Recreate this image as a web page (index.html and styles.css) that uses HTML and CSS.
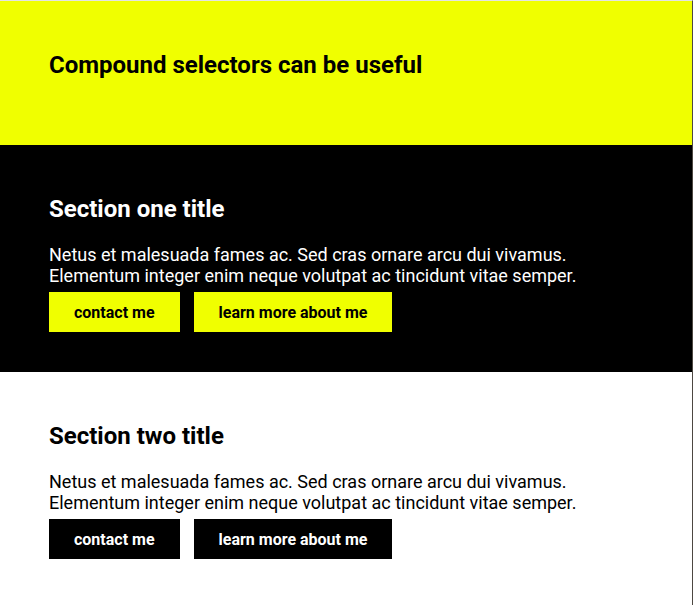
FILE: index.html
```html
<!DOCTYPE html>
<html lang="en">
<head>
<meta charset="utf-8">
<title>Compound selectors</title>
<link rel="stylesheet" href="styles.css">
</head>
<body>
<div class="page">
  <header class="hero">
    <h1 class="hero-title">Compound selectors can be useful</h1>
  </header>
  <section class="section section-dark">
    <h2 class="section-title">Section one title</h2>
    <p class="section-text">Netus et malesuada fames ac. Sed cras ornare arcu dui vivamus.<br>Elementum integer enim neque volutpat ac tincidunt vitae semper.</p>
    <div class="actions">
      <a class="btn">contact me</a>
      <a class="btn">learn more about me</a>
    </div>
  </section>
  <section class="section section-light">
    <h2 class="section-title">Section two title</h2>
    <p class="section-text">Netus et malesuada fames ac. Sed cras ornare arcu dui vivamus.<br>Elementum integer enim neque volutpat ac tincidunt vitae semper.</p>
    <div class="actions">
      <a class="btn">contact me</a>
      <a class="btn">learn more about me</a>
    </div>
  </section>
</div>
</body>
</html>
```
FILE: styles.css
```css
html, body {
  margin: 0;
  padding: 0;
  background: #ffffff;
}
body {
  font-family: Roboto, "Liberation Sans", sans-serif;
  min-height: 605px;
  box-sizing: border-box;
  border-top: 1px solid #e4e4e4;
  border-right: 1px solid #4d4842;
}
.page {
  display: flex;
  flex-direction: column;
}
.hero {
  background: #f0ff00;
  padding: 50px 49px 0;
  height: 144px;
  box-sizing: border-box;
}
.hero-title {
  margin: 0;
  font-size: 24px;
  line-height: 28px;
  font-weight: 700;
  color: #000;
}
.section {
  padding: 50px 49px 40px;
}
.section-dark {
  background: #000;
  color: #fff;
}
.section-light {
  background: #fff;
  color: #000;
}
.section-title {
  margin: 0 0 21px;
  font-size: 24px;
  line-height: 28px;
  font-weight: 700;
}
.section-text {
  margin: 0 0 6px;
  font-size: 18px;
  line-height: 21px;
}
.actions {
  display: flex;
  gap: 14px;
}
.btn {
  display: inline-flex;
  align-items: center;
  height: 40px;
  padding: 0 25px;
  font-size: 16px;
  font-weight: 700;
}
.section-dark .btn {
  background: #f0ff00;
  color: #000;
}
.section-light .btn {
  background: #000;
  color: #fff;
}
```
